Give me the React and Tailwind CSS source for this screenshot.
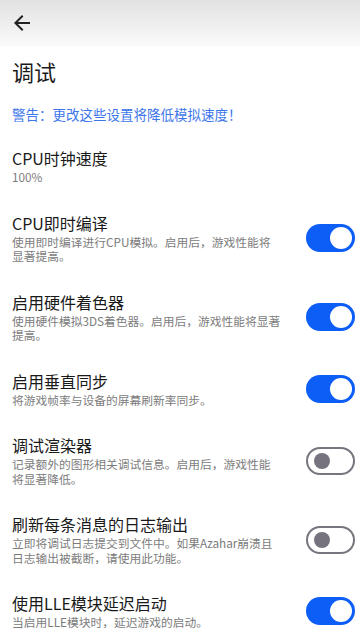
import React from "react";

const font = { fontFamily: '"Noto Sans CJK SC", "Noto Sans", sans-serif' };

function Toggle({ on }) {
  if (on) {
    return (
      <div className="relative h-[28px] w-[49px] shrink-0 rounded-full bg-[#0d5ef6]">
        <div className="absolute right-[3px] top-[3px] h-[22px] w-[22px] rounded-full bg-white" />
      </div>
    );
  }
  return (
    <div className="relative h-[28px] w-[49px] shrink-0 rounded-full border-2 border-[#77757d] bg-white">
      <div className="absolute left-[6px] top-[4px] h-[16px] w-[16px] rounded-full bg-[#76737e]" />
    </div>
  );
}

function Item({ title, desc, toggle }) {
  return (
    <div className="flex items-center justify-between py-[14px] pl-3 pr-[5px]">
      <div className="flex flex-col">
        <div className="text-[16px] leading-[20px] text-[#1a1a1a]">{title}</div>
        <div className="mt-[2px] whitespace-nowrap text-[11.75px] leading-[14.5px] text-[#7c7c7c]">
          {desc.map((l, i) => (
            <React.Fragment key={i}>
              {i > 0 && <br />}
              {l}
            </React.Fragment>
          ))}
        </div>
      </div>
      {toggle !== undefined && <Toggle on={toggle} />}
    </div>
  );
}

export default function App() {
  return (
    <div className="min-h-[640px] w-[360px] overflow-hidden bg-white" style={font}>
      <div className="flex h-[46px] items-center bg-gradient-to-b from-[#e2e2e2] to-[#fafafa] pl-[10px]">
        <svg width="24" height="24" viewBox="0 0 24 24" fill="#222">
          <path d="M20 11H7.83l5.59-5.59L12 4l-8 8 8 8 1.41-1.41L7.83 13H20v-2z" />
        </svg>
      </div>
      <div className="mt-[10px] pl-3 text-[22px] leading-[30px] text-[#1a1a1a]">调试</div>
      <div className="mt-[18px] pl-3 text-[13.5px] leading-[20px] text-[#3c76ea]">
        警告：更改这些设置将降低模拟速度！
      </div>
      <div className="mt-[10px]">
        <Item title="CPU时钟速度" desc={["100%"]} />
        <Item
          title="CPU即时编译"
          desc={["使用即时编译进行CPU模拟。启用后，游戏性能将", "显著提高。"]}
          toggle={true}
        />
        <Item
          title="启用硬件着色器"
          desc={["使用硬件模拟3DS着色器。启用后，游戏性能将显著", "提高。"]}
          toggle={true}
        />
        <Item title="启用垂直同步" desc={["将游戏帧率与设备的屏幕刷新率同步。"]} toggle={true} />
        <Item
          title="调试渲染器"
          desc={["记录额外的图形相关调试信息。启用后，游戏性能", "将显著降低。"]}
          toggle={false}
        />
        <Item
          title="刷新每条消息的日志输出"
          desc={["立即将调试日志提交到文件中。如果Azahar崩溃且", "日志输出被截断，请使用此功能。"]}
          toggle={false}
        />
        <Item title="使用LLE模块延迟启动" desc={["当启用LLE模块时，延迟游戏的启动。"]} toggle={true} />
      </div>
    </div>
  );
}
